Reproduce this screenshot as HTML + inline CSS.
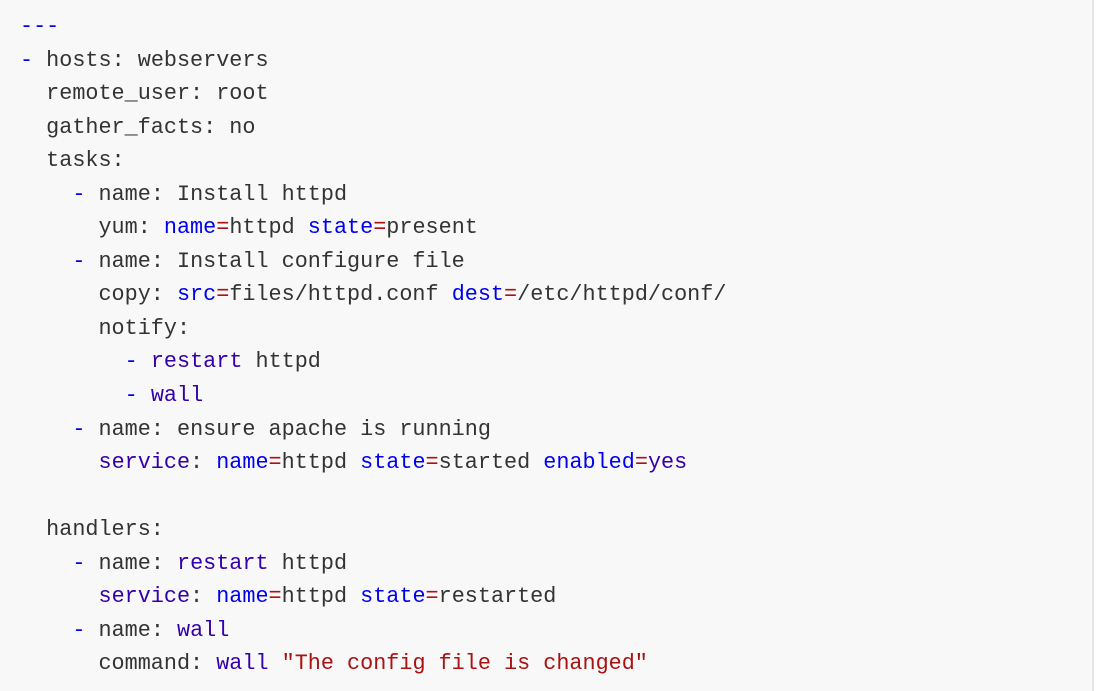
<!DOCTYPE html>
<html><head><meta charset="utf-8"><style>
html,body{margin:0;padding:0;background:#fff;width:1099px;height:691px;overflow:hidden}
.box{position:absolute;left:0;top:0;width:1092px;height:691px;background:#f8f8f8;border-right:2px solid #e3e6ea}
pre{margin:0;position:absolute;left:20px;top:10px;font-family:"Liberation Mono",monospace;font-size:21.8px;line-height:33.55px;color:#333}
.b{color:#0000ee}.p{color:#3300aa}.r{color:#aa1111}
</style></head><body><div class="box"><pre><span class="b">---</span>
<span class="b">-</span> hosts: webservers
  remote_user: root
  gather_facts: no
  tasks:
    <span class="b">-</span> name: Install httpd
      yum: <span class="b">name</span><span class="r">=</span>httpd <span class="b">state</span><span class="r">=</span>present
    <span class="b">-</span> name: Install configure file
      copy: <span class="b">src</span><span class="r">=</span>files/httpd.conf <span class="b">dest</span><span class="r">=</span>/etc/httpd/conf/
      notify:
        <span class="b">-</span> <span class="p">restart</span> httpd
        <span class="b">-</span> <span class="p">wall</span>
    <span class="b">-</span> name: ensure apache is running
      <span class="p">service</span>: <span class="b">name</span><span class="r">=</span>httpd <span class="b">state</span><span class="r">=</span>started <span class="b">enabled</span><span class="r">=</span><span class="p">yes</span>

  handlers:
    <span class="b">-</span> name: <span class="p">restart</span> httpd
      <span class="p">service</span>: <span class="b">name</span><span class="r">=</span>httpd <span class="b">state</span><span class="r">=</span>restarted
    <span class="b">-</span> name: <span class="p">wall</span>
      command: <span class="p">wall</span> <span class="r">"The config file is changed"</span></pre></div></body></html>
